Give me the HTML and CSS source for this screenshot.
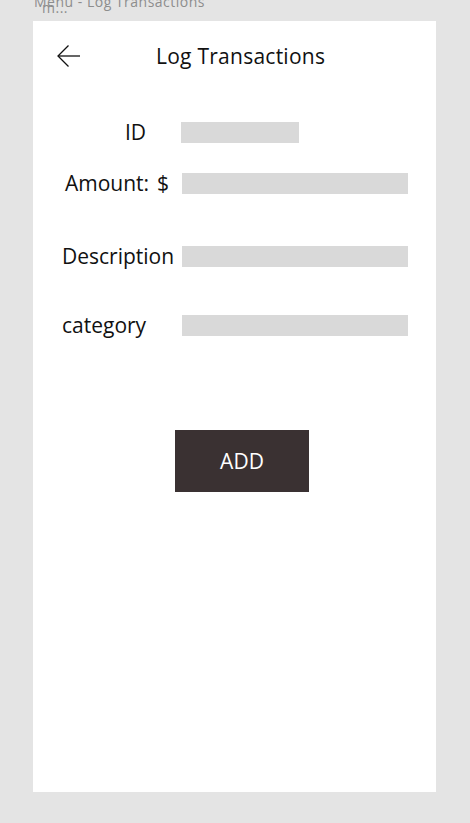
FILE: index.html
```html
<!DOCTYPE html>
<html>
<head>
<meta charset="utf-8">
<link rel="stylesheet" href="styles.css">
</head>
<body>
<div class="topbar">
  <span class="caption">Menu - Log Transactions</span>
  <span class="caption-sub">m...</span>
</div>
<main class="card">
  <header class="head">
    <svg class="back" width="24" height="24" viewBox="0 0 24 24" fill="none" stroke="#111" stroke-width="1.3">
      <path d="M1 12 H23"/>
      <path d="M11.5 1.5 L1 12 L11.5 22.5"/>
    </svg>
    <h1 class="title">Log Transactions</h1>
  </header>
  <form class="form">
    <div class="row row-id">
      <label class="label">ID</label>
      <span class="field field-short"></span>
    </div>
    <div class="row row-amount">
      <label class="label">Amount: $</label>
      <span class="field"></span>
    </div>
    <div class="row row-desc">
      <label class="label">Description</label>
      <span class="field"></span>
    </div>
    <div class="row row-cat">
      <label class="label">category</label>
      <span class="field"></span>
    </div>
    <div class="actions">
      <button type="button" class="btn">ADD</button>
    </div>
  </form>
</main>
</body>
</html>
```

FILE: styles.css
```css
* { box-sizing: border-box; }
html, body { margin: 0; padding: 0; }
body {
  background: #e4e4e4;
  font-family: "Open Sans", "Noto Sans", sans-serif;
  color: #111;
  width: 470px;
  height: 823px;
  overflow: hidden;
}
.topbar {
  position: relative;
  height: 21px;
  overflow: hidden;
}
.caption {
  display: block;
  margin-left: 34px;
  margin-top: -8px;
  font-size: 14px;
  line-height: 19px;
  letter-spacing: 0.5px;
  color: #8d8d8d;
}
.caption-sub {
  position: absolute;
  left: 42px;
  top: -2px;
  font-size: 14px;
  line-height: 19px;
  letter-spacing: 0.5px;
  color: #8d8d8d;
}
.card {
  margin-left: 33px;
  width: 403px;
  height: 771px;
  background: #fff;
  display: flex;
  flex-direction: column;
}
.head {
  display: flex;
  align-items: center;
  height: 70px;
  padding-left: 24px;
}
.back { display: block; }
.title {
  margin: 0 0 0 75px;
  font-size: 21px;
  font-weight: 400;
  line-height: 26px;
  letter-spacing: 0.25px;
}
.form {
  display: flex;
  flex-direction: column;
  margin: 0;
}
.row {
  display: flex;
  align-items: center;
}
.label {
  font-size: 21px;
  line-height: 21px;
  word-spacing: 2.5px;
}
.field {
  display: block;
  height: 21px;
  width: 226px;
  background: #d9d9d9;
}
.field-short { width: 118px; }
.row-id { margin-top: 31px; padding-left: 92px; }
.row-id .label { width: 56px; }
.row-amount { margin-top: 30px; padding-left: 32px; }
.row-amount .label { width: 117px; }
.row-desc { margin-top: 52px; padding-left: 29px; }
.row-desc .label { width: 120px; }
.row-cat { margin-top: 48px; padding-left: 29px; }
.row-cat .label { width: 120px; }
.actions {
  display: flex;
  justify-content: center;
  margin-top: 94px;
  padding-left: 15px;
}
.btn {
  width: 134px;
  height: 62px;
  border: none;
  background: #3a3132;
  color: #fff;
  font-family: "Open Sans", "Noto Sans", sans-serif;
  font-size: 21px;
  padding: 0;
}
```
